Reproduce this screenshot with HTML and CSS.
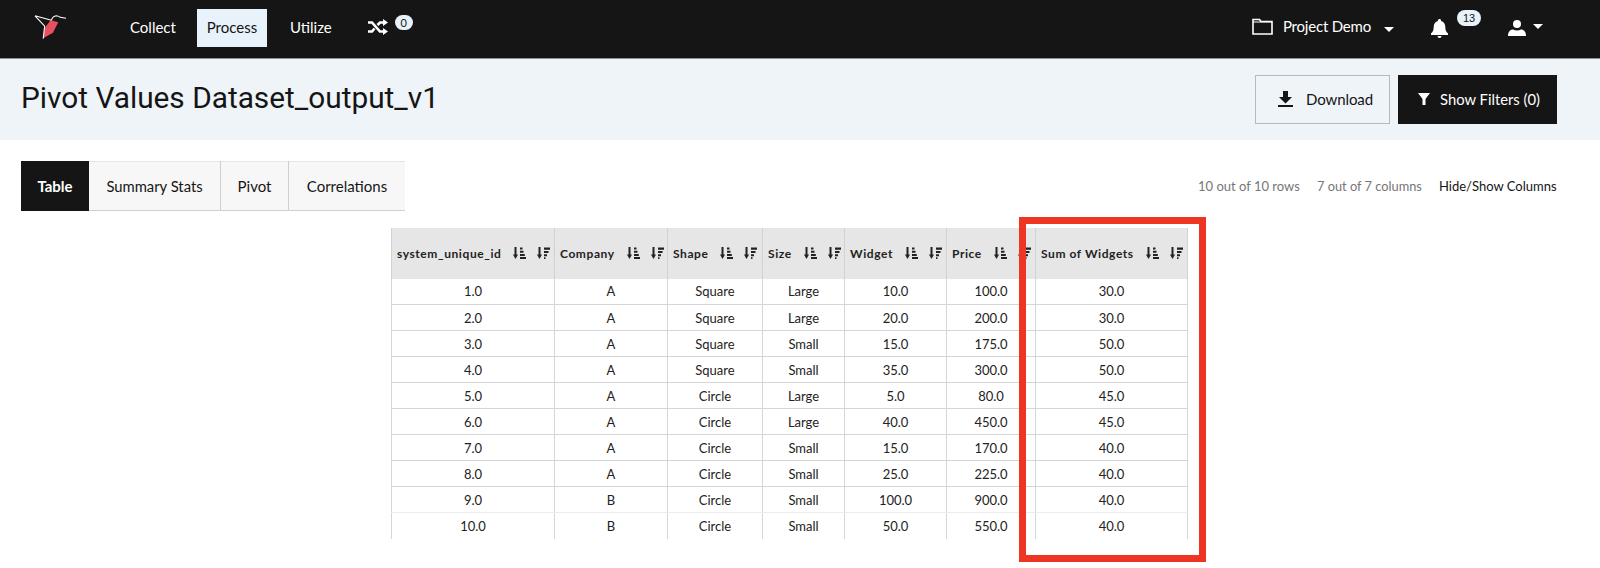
FILE: index.html
```html
<!DOCTYPE html>
<html lang="en">
<head>
<meta charset="utf-8">
<title>Pivot Values Dataset_output_v1</title>
<link rel="stylesheet" href="styles.css">
</head>
<body>
<svg class="defs" width="0" height="0">
  <symbol id="sort-asc" viewBox="0 0 13 13">
    <path d="M2.500 0v8" stroke="currentColor" stroke-width="2"/>
    <path d="M0 7.500h5L2.500 12z" fill="currentColor"/>
    <path d="M7 .5h2.500v2H7zM7 3.700h3.500v2H7zM7 6.900h4.800v2H7zM7 10.100h6v2H7z" fill="currentColor"/>
  </symbol>
  <symbol id="sort-desc" viewBox="0 0 13 13">
    <path d="M2.500 0v8" stroke="currentColor" stroke-width="2"/>
    <path d="M0 7.500h5L2.500 12z" fill="currentColor"/>
    <path d="M7 .5h6v2.200H7zM7 4h4.500v2H7zM7 7.300h3v2H7zM7 10.300h1.500v1.800H7z" fill="currentColor"/>
  </symbol>
</svg>
<header class="nav">
  <svg class="logo" viewBox="0 0 34 26" aria-label="Logo">
    <path d="M17 6 25 8 19.500 19 9.500 24.500 11 14z" fill="#e8505f"/>
    <path d="M1 1.500 18 6M1 1.500 11 12M18 6Q19 2 23 1.500 26 2 27 3L33 4M11 12 9.500 25" fill="none" stroke="#fff" stroke-width="1.100"/>
  </svg>
  <nav class="nav-links">
    <a class="nav-link">Collect</a>
    <a class="nav-link active">Process</a>
    <a class="nav-link">Utilize</a>
    <span class="shuffle">
      <svg class="ico-shuffle" viewBox="0 0 20 16"><path d="M0 3.500h4l8 9h3.500M0 12.500h4l2.500-3M9.500 6l2.500-2.500h3.500" fill="none" stroke="#fff" stroke-width="2.600"/><path d="M15 0l5 3.500-5 3.500zM15 9l5 3.500-5 3.500z" fill="#fff"/></svg>
      <span class="badge badge-zero">0</span>
    </span>
  </nav>
  <div class="nav-right">
    <svg class="ico-folder" viewBox="0 0 21 17"><path d="M1 16V1.500h6.500l1.500 2h11V16z" fill="none" stroke="#fff" stroke-width="1.600"/><path d="M1 4h19" stroke="#fff" stroke-width="1"/></svg>
    <span class="project">Project Demo</span>
    <span class="caret caret-project"></span>
    <span class="bell-wrap">
      <svg class="ico-bell" viewBox="0 0 17 20"><path d="M8.500 0a1.500 1.500 0 0 1 1.500 2c3 .7 4.300 3.200 4.300 6 0 3.500 1 5 2.700 6.500V16H0v-1.500C1.700 13 2.700 11.500 2.700 8c0-2.800 1.300-5.300 4.300-6a1.500 1.500 0 0 1 1.500-2zM6.500 17h4a2 2 0 0 1-4 0z" fill="#fff"/></svg>
      <span class="badge badge-count">13</span>
    </span>
    <svg class="ico-user" viewBox="0 0 18 16"><circle cx="9" cy="4" r="4" fill="#fff"/><path d="M0 16c0-4 2-6.500 5-6.500 1.200.6 2.500 1 4 1s2.800-.4 4-1c3 0 5 2.500 5 6.500z" fill="#fff"/></svg>
    <span class="caret caret-user"></span>
  </div>
</header>

<section class="title-bar">
  <h1 class="title">Pivot Values Dataset_output_v1</h1>
  <div class="actions">
    <button class="btn btn-light">
      <svg class="ico-download" viewBox="0 0 15 16"><path d="M5 0h5v6h4l-6.500 6.500L1 6h4zM0 14h15v2H0z" fill="#151515"/></svg>
      Download
    </button>
    <button class="btn btn-dark">
      <svg class="ico-filter" viewBox="0 0 12 12"><path d="M0 0h12L7.500 6v6h-3V6z" fill="#fff"/></svg>
      Show Filters (0)
    </button>
  </div>
</section>

<section class="toolbar">
  <div class="tabs">
    <a class="tab tab-active">Table</a>
    <a class="tab tab-summary">Summary Stats</a>
    <a class="tab tab-pivot">Pivot</a>
    <a class="tab tab-corr">Correlations</a>
  </div>
  <div class="meta">
    <span class="meta-item">10 out of 10 rows</span>
    <span class="meta-item">7 out of 7 columns</span>
    <a class="meta-link">Hide/Show Columns</a>
  </div>
</section>

<main class="table-wrap">
  <table class="data">
    <colgroup>
      <col class="c1"><col class="c2"><col class="c3"><col class="c4"><col class="c5"><col class="c6"><col class="c7">
    </colgroup>
    <thead>
      <tr>
        <th><div class="th"><span>system_unique_id</span><span class="sorts"><svg class="sort"><use href="#sort-asc"/></svg><svg class="sort"><use href="#sort-desc"/></svg></span></div></th>
        <th><div class="th"><span>Company</span><span class="sorts"><svg class="sort"><use href="#sort-asc"/></svg><svg class="sort"><use href="#sort-desc"/></svg></span></div></th>
        <th><div class="th"><span>Shape</span><span class="sorts"><svg class="sort"><use href="#sort-asc"/></svg><svg class="sort"><use href="#sort-desc"/></svg></span></div></th>
        <th><div class="th"><span>Size</span><span class="sorts"><svg class="sort"><use href="#sort-asc"/></svg><svg class="sort"><use href="#sort-desc"/></svg></span></div></th>
        <th><div class="th"><span>Widget</span><span class="sorts"><svg class="sort"><use href="#sort-asc"/></svg><svg class="sort"><use href="#sort-desc"/></svg></span></div></th>
        <th><div class="th"><span>Price</span><span class="sorts"><svg class="sort"><use href="#sort-asc"/></svg><svg class="sort"><use href="#sort-desc"/></svg></span></div></th>
        <th><div class="th"><span>Sum of Widgets</span><span class="sorts"><svg class="sort"><use href="#sort-asc"/></svg><svg class="sort"><use href="#sort-desc"/></svg></span></div></th>
      </tr>
    </thead>
    <tbody>
      <tr><td>1.0</td><td>A</td><td>Square</td><td>Large</td><td>10.0</td><td>100.0</td><td>30.0</td></tr>
      <tr><td>2.0</td><td>A</td><td>Square</td><td>Large</td><td>20.0</td><td>200.0</td><td>30.0</td></tr>
      <tr><td>3.0</td><td>A</td><td>Square</td><td>Small</td><td>15.0</td><td>175.0</td><td>50.0</td></tr>
      <tr><td>4.0</td><td>A</td><td>Square</td><td>Small</td><td>35.0</td><td>300.0</td><td>50.0</td></tr>
      <tr><td>5.0</td><td>A</td><td>Circle</td><td>Large</td><td>5.0</td><td>80.0</td><td>45.0</td></tr>
      <tr><td>6.0</td><td>A</td><td>Circle</td><td>Large</td><td>40.0</td><td>450.0</td><td>45.0</td></tr>
      <tr><td>7.0</td><td>A</td><td>Circle</td><td>Small</td><td>15.0</td><td>170.0</td><td>40.0</td></tr>
      <tr><td>8.0</td><td>A</td><td>Circle</td><td>Small</td><td>25.0</td><td>225.0</td><td>40.0</td></tr>
      <tr><td>9.0</td><td>B</td><td>Circle</td><td>Small</td><td>100.0</td><td>900.0</td><td>40.0</td></tr>
      <tr><td>10.0</td><td>B</td><td>Circle</td><td>Small</td><td>50.0</td><td>550.0</td><td>40.0</td></tr>
    </tbody>
  </table>
  <div class="highlight"></div>
</main>
</body>
</html>
```
FILE: styles.css
```css
* { box-sizing: border-box; }
html, body { margin: 0; height: 100%; }
body { font-family: Lato, "Liberation Sans", sans-serif; color: #151515; background: #fff; overflow: hidden; }
.defs { position: absolute; }

.nav { height: 59px; background: #151515; border-bottom: 1px solid #8f9396; display: flex; align-items: center; padding-left: 34px; color: #fff; font-size: 15px; }
.logo { width: 33px; height: 26px; margin-top: -4px; }
.nav-links { display: flex; align-items: center; margin-left: 50px; }
.nav-link { color: #fff; height: 38px; padding: 0 11px 2px; display: flex; align-items: center; margin-top: -3px; }
.nav-link:first-child { margin-left: 2px; padding-right: 21px; }
.nav-link.active { background: #e7f2fa; color: #151515; width: 70px; padding: 0 0 2px; justify-content: center; margin-left: 0; }
.nav-link:nth-child(3) { padding-left: 23px; }
.shuffle { display: flex; align-items: flex-start; margin-left: 25px; margin-top: -4px; }
.ico-shuffle { width: 20px; height: 16px; }
.badge { background: #e7f2fa; color: #151515; display: flex; align-items: center; justify-content: center; }
.badge-zero { width: 18px; height: 15px; border-radius: 8px; font-size: 11px; margin-left: 7px; margin-top: -4px; }
.nav-right { margin-left: auto; display: flex; align-items: center; padding-right: 57px; }
.ico-folder { width: 21px; height: 17px; margin-top: -5px; }
.project { margin-left: 10px; margin-top: -6px; font-size: 15px; letter-spacing: -.2px; }
.caret { width: 0; height: 0; border-left: 5px solid transparent; border-right: 5px solid transparent; border-top: 5px solid #fff; }
.caret-project { margin-left: 13px; margin-top: 0; }
.bell-wrap { display: flex; align-items: flex-start; margin-left: 37px; margin-top: -2px; }
.ico-bell { width: 17px; height: 20px; margin-top: 2px; }
.badge-count { width: 24px; height: 16px; border-radius: 8px; font-size: 11px; margin-left: 9px; margin-top: -7px; font-family: "Liberation Sans", sans-serif; }
.ico-user { width: 18px; height: 16px; margin-left: 27px; margin-top: -3px; }
.caret-user { margin-left: 7px; margin-top: -5px; }

.title-bar { height: 81px; background: #eff4f8; display: flex; align-items: center; justify-content: space-between; padding: 0 43px 0 21px; }
.title { margin: 0 0 5px; font: 400 29.800px Roboto, sans-serif; color: #151515; }
.actions { display: flex; gap: 8px; margin-top: -1px; }
.btn { height: 49px; display: flex; align-items: center; font: 400 15px Lato, sans-serif; border: 1px solid #b6babd; padding: 0; }
.btn-light { width: 135px; background: #eff4f8; color: #151515; padding-left: 22px; gap: 13px; letter-spacing: -.1px; }
.btn-dark { width: 159px; background: #151515; color: #fff; border-color: #151515; padding-left: 19px; gap: 10px; font-size: 14.800px; }
.ico-download { width: 15px; height: 16px; }
.ico-filter { width: 12px; height: 12px; }

.toolbar { display: flex; justify-content: space-between; align-items: center; padding: 21px 43px 0 21px; }
.tabs { display: flex; height: 50px; border-top: 1px solid #e6e6e6; border-bottom: 1px solid #d0d0d0; background: #f7f7f7; }
.tab { display: flex; align-items: center; justify-content: center; font-size: 15px; border-right: 1px solid #cfcfcf; margin: -1px 0 -1px; }
.tab-active { width: 68px; background: #151515; color: #fff; font-weight: 700; border: 0; height: 50px; }
.tab-summary { width: 132px; font-size: 14.800px; }
.tab-pivot { width: 68px; }
.tab-corr { width: 116px; border-right: 0; }
.meta { display: flex; font-size: 13px; color: #767676; }
.meta-item:first-child { width: 119px; }
.meta-item:nth-child(2) { width: 122px; font-size: 12.800px; }
.meta-link { color: #151515; width: 118px; white-space: nowrap; }

.table-wrap { position: relative; padding: 17px 0 0 391px; }
.data { border-collapse: collapse; table-layout: fixed; width: 796px; font-size: 13px; color: #222; }
.c1 { width: 163px; } .c2 { width: 113px; } .c3 { width: 95px; } .c4 { width: 82px; } .c5 { width: 102px; } .c6 { width: 89px; } .c7 { width: 152px; }
.data th { height: 50.500px; background: #e6e6e6; border-right: 1px solid #d2d2d2; border-left: 1px solid #d2d2d2; padding: 0 0 0 5px; font-size: 12px; font-weight: 700; letter-spacing: .58px; text-align: left; color: #222; }
.th { display: flex; align-items: center; white-space: nowrap; }
.sorts { display: flex; gap: 11px; margin-left: 12px; flex: none; }
.sort { width: 13px; height: 13px; color: #222; }
.data td { height: 26px; padding: 0; text-align: center; border: 1px solid #d6d6d6; border-top: 0; }
.data tbody tr:last-child td { border-bottom: 0; }
.data tbody tr:nth-child(n+9) td { border-bottom-color: #ececec; }

.highlight { position: absolute; left: 1019px; top: 6px; width: 187px; height: 345px; border: 7px solid #ee3524; pointer-events: none; }
```
